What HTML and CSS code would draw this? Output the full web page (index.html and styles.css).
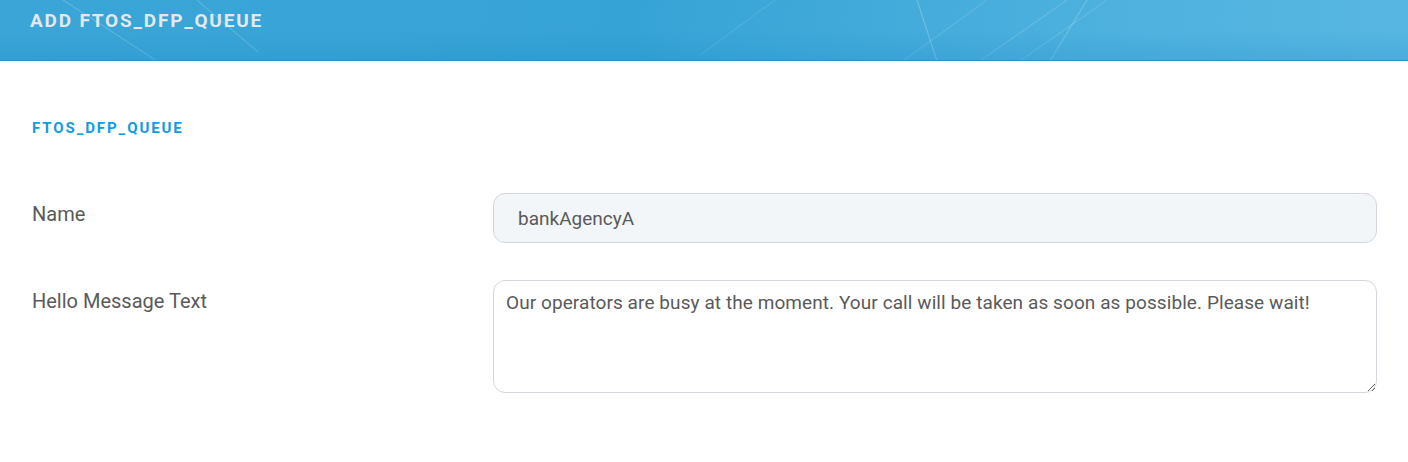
FILE: index.html
```html
<!DOCTYPE html>
<html lang="en">
<head>
<meta charset="utf-8">
<title>Add FTOS_DFP_QUEUE</title>
<link rel="stylesheet" href="styles.css">
</head>
<body>
<header class="top-bar">
  <svg class="top-bar-lines" width="1408" height="61" viewBox="0 0 1408 61" aria-hidden="true">
    <g stroke="#ffffff" stroke-width="1.2" fill="none">
      <line x1="63" y1="0" x2="157" y2="61" stroke-opacity="0.18"/>
      <line x1="197" y1="0" x2="258" y2="52" stroke-opacity="0.18"/>
      <line x1="700" y1="55" x2="775" y2="0" stroke-opacity="0.10"/>
      <line x1="917" y1="0" x2="937" y2="61" stroke-opacity="0.22"/>
      <line x1="903" y1="61" x2="987" y2="0" stroke-opacity="0.12"/>
      <line x1="980" y1="61" x2="1067" y2="0" stroke-opacity="0.14"/>
      <line x1="1087" y1="0" x2="1050" y2="61" stroke-opacity="0.18"/>
      <line x1="1020" y1="61" x2="1107" y2="0" stroke-opacity="0.12"/>
    </g>
  </svg>
  <h1 class="top-title">ADD FTOS_DFP_QUEUE</h1>
</header>
<main class="content">
  <h2 class="section-title">FTOS_DFP_QUEUE</h2>
  <form class="form">
    <div class="form-row">
      <label class="form-label" for="name">Name</label>
      <input class="form-input" id="name" type="text" value="bankAgencyA" readonly>
    </div>
    <div class="form-row">
      <label class="form-label" for="hello">Hello Message Text</label>
      <textarea class="form-textarea" id="hello">Our operators are busy at the moment. Your call will be taken as soon as possible. Please wait!</textarea>
    </div>
  </form>
</main>
</body>
</html>
```
FILE: styles.css
```css
* { box-sizing: border-box; }
html, body {
  margin: 0;
  padding: 0;
  background: #ffffff;
  font-family: Roboto, "Liberation Sans", sans-serif;
}
.top-bar {
  position: relative;
  height: 61px;
  padding: 10px 30px 0;
  background: linear-gradient(100deg, #3ba5d7 0%, #36a3d6 45%, #4fb2df 80%, #58b7e2 100%);
  border-bottom: 1px solid #2493c9;
  overflow: hidden;
}
.top-bar::after {
  content: "";
  position: absolute;
  left: 0; right: 0; bottom: 0;
  height: 30px;
  background: linear-gradient(180deg, rgba(30,140,200,0) 0%, rgba(30,140,200,0.25) 100%);
  pointer-events: none;
}
.top-bar-lines {
  position: absolute;
  left: 0; top: 0;
}
.top-title {
  position: relative;
  margin: 0;
  font-size: 19px;
  line-height: 22px;
  font-weight: 700;
  letter-spacing: 1.8px;
  color: #e4e8ea;
}
.content {
  padding: 57px 31px 0 32px;
}
.section-title {
  margin: 0;
  font-size: 15px;
  line-height: 20px;
  font-weight: 700;
  letter-spacing: 1.9px;
  color: #0e9de0;
}
.form {
  display: flex;
  flex-direction: column;
  gap: 37px;
  margin-top: 55px;
}
.form-row {
  display: grid;
  grid-template-columns: 461px 1fr;
  align-items: start;
}
.form-label {
  padding-top: 9px;
  font-size: 20px;
  line-height: 24px;
  color: #5a5a5a;
}
.form-input {
  display: block;
  width: 100%;
  height: 50px;
  margin: 0;
  padding: 0 24px;
  font-family: Roboto, "Liberation Sans", sans-serif;
  font-size: 19px;
  color: #5a5a5a;
  background: #f3f6f9;
  border: 1px solid #d3d7db;
  border-radius: 12px;
  outline: none;
}
.form-textarea {
  display: block;
  width: 100%;
  height: 113px;
  margin: 0;
  padding: 11px 12px 12px;
  font-family: Roboto, "Liberation Sans", sans-serif;
  font-size: 19px;
  line-height: 22px;
  letter-spacing: 0.08px;
  color: #5a5a5a;
  background: #ffffff;
  border: 1px solid #d3d7db;
  border-radius: 12px;
  outline: none;
}
```
